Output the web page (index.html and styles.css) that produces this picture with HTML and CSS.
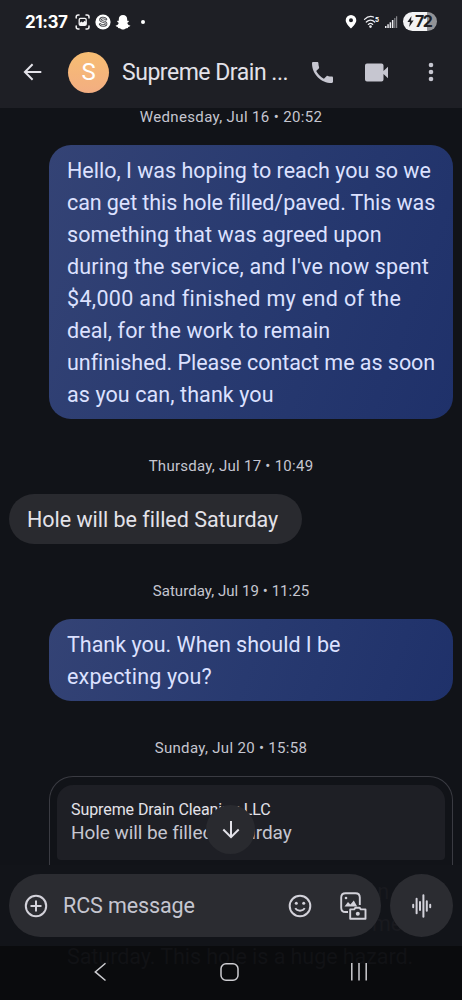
FILE: index.html
```html
<!DOCTYPE html>
<html lang="en">
<head>
<meta charset="utf-8">
<title>Messages</title>
<link rel="stylesheet" href="styles.css">
</head>
<body>
<div class="phone">
  <header class="header">
    <div class="status">
      <span class="clock">21:37</span>
      <svg class="status-left" width="74" height="18" viewBox="0 0 74 18">
        <g fill="none" stroke="#f4f4f6" stroke-width="1.5" stroke-linecap="round">
          <path d="M1.200 5V4Q1.200 2 3.200 2H4M11 2h1q2 0 2 2v1M14 13v1q0 2-2 2h-1M4 16H3.200q-2 0-2-2v-1"/>
        </g>
        <rect x="4.200" y="5.400" width="7" height="7" rx="1.300" fill="none" stroke="#f4f4f6" stroke-width="1.300"/>
        <path d="M4.500 12v-2l2-1.600 1.400 1 1.800-1.600 1.500 1.300V12z" fill="#f4f4f6"/>
        <circle cx="28" cy="9" r="7.600" fill="#fff"/>
        <path d="M31 6.300c-1.500-1.900-5.600-1.500-5.600.5 0 2.300 5.700 1.300 5.700 3.900 0 2.300-4.300 2.600-6 .5" fill="none" stroke="#44454a" stroke-width="2.500" stroke-linecap="round"/>
        <path d="M31 6.300c-1.500-1.900-5.600-1.500-5.600.5 0 2.300 5.700 1.300 5.700 3.900 0 2.300-4.300 2.600-6 .5" fill="none" stroke="#e7e7e8" stroke-width="1" stroke-linecap="round"/>
        <path d="M48 2c2.700 0 4.200 1.800 4.200 4.200v1.600c.5.200 1.300-.2 1.600.4.300.7-1 1-1.400 1.500-.3 1 1.100 2.400 2.900 2.900.3 1-1.400 1.200-2.100 1.500l-.3 1c-.7.200-1.400-.1-2.200.3-.9.500-1.500 1.200-2.700 1.200s-1.800-.7-2.700-1.200c-.8-.4-1.500-.1-2.200-.3l-.3-1c-.7-.3-2.400-.5-2.100-1.500 1.800-.5 3.200-1.900 2.900-2.900-.4-.5-1.700-.8-1.400-1.500.3-.6 1.100-.2 1.600-.4V6.200C43.800 3.800 45.300 2 48 2z" fill="#fff"/>
        <circle cx="68" cy="9" r="2" fill="#fff"/>
      </svg>
      <span class="spacer"></span>
      <svg class="status-right" width="54" height="18" viewBox="0 0 54 18">
        <path fill-rule="evenodd" d="M6 2a5.300 5.300 0 0 1 5.300 5.300C11.300 11 6 15.500 6 15.500S.7 11 .7 7.300A5.300 5.300 0 0 1 6 2zm0 3.200a2 2 0 1 0 0 4 2 2 0 0 0 0-4z" fill="#fff"/>
        <g fill="none" stroke="#ececf0" stroke-width="1.300" stroke-linecap="round"><path d="M19.500 6.400C22.500 3.400 26 3 28.500 4M21.300 9c2.600-2.400 6-2.400 8.400 0M23.300 11.400c1.400-1.200 3.100-1.200 4.400 0"/></g>
        <circle cx="25.500" cy="13.600" r="1.300" fill="#ececf0"/>
        <text x="30" y="8.500" class="wifi-gen">5</text>
        <path d="M40 13h1.500v2H40zM42.300 11.300h1.500V15h-1.500zM44.600 9.300h1.500V15h-1.500zM46.900 7h1.500v8h-1.500z" fill="#ececf0"/>
        <path d="M49.200 5h1.200v10h-1.200zM51 3.300h1.200V15H51z" fill="#85868b"/>
      </svg>
      <div class="battery">
        <svg width="7" height="11" viewBox="0 0 7 11"><path d="M4.500 0 .4 6h2.500L2.200 11l4.400-6.400H4z" fill="#1e1f24"/></svg>
        <span>72</span>
      </div>
    </div>
    <div class="appbar">
      <svg class="back" width="20" height="18" viewBox="0 0 20 18"><path d="M18.300 9H2M9.600 1.300 1.900 9l7.700 7.700" fill="none" stroke="#e3e2e9" stroke-width="2"/></svg>
      <div class="avatar">S</div>
      <h1 class="title">Supreme Drain ...</h1>
      <svg class="call" width="21" height="21" viewBox="3 3 18 18"><path fill="#c6c6d0" d="M20 15.500c-1.250 0-2.450-.2-3.570-.57-.35-.11-.74-.03-1.020.24l-2.200 2.200a15.050 15.050 0 0 1-6.590-6.580l2.200-2.210c.28-.27.36-.66.250-1.010A11.360 11.360 0 0 1 8.500 4c0-.55-.45-1-1-1H4c-.55 0-1 .45-1 1 0 9.390 7.610 17 17 17 .55 0 1-.45 1-1v-3.500c0-.55-.45-1-1-1z"/></svg>
      <svg class="video" width="23" height="19" viewBox="0 0 23 19"><path fill="#c6c6d0" d="M2 .5h14.500q2 0 2 2V8L23 3.700v11.600L18.500 11v5.500q0 2-2 2H2q-2 0-2-2v-14q0-2 2-2z"/></svg>
      <svg class="more" width="6" height="20" viewBox="0 0 6 20"><g fill="#c6c6d0"><circle cx="3" cy="3" r="2.300"/><circle cx="3" cy="10" r="2.300"/><circle cx="3" cy="17" r="2.300"/></g></svg>
    </div>
  </header>

  <main class="thread">
    <time class="stamp first"><span class="d1">Wednesday, Jul 16 • 20:52</span></time>
    <div class="bubble sent">
      <span class="l1">Hello, I was hoping to reach you so we</span><br>
      <span class="l2">can get this hole filled/paved. This was</span><br>
      <span class="l3">something that was agreed upon</span><br>
      <span class="l4">during the service, and I've now spent</span><br>
      <span class="l5">$4,000 and finished my end of the</span><br>
      <span class="l6">deal, for the work to remain</span><br>
      <span class="l7">unfinished. Please contact me as soon</span><br>
      <span class="l8">as you can, thank you</span>
    </div>
    <time class="stamp"><span class="d2">Thursday, Jul 17 • 10:49</span></time>
    <div class="bubble received"><span class="l9">Hole will be filled Saturday</span></div>
    <time class="stamp"><span class="d3">Saturday, Jul 19 • 11:25</span></time>
    <div class="bubble sent">
      <span class="l10">Thank you. When should I be</span><br>
      <span class="l11">expecting you?</span>
    </div>
    <time class="stamp"><span class="d4">Sunday, Jul 20 • 15:58</span></time>
    <div class="reply">
      <div class="quote">
        <div class="quote-name">Supreme Drain Cleaning LLC</div>
        <div class="quote-text">Hole will be filled Saturday</div>
      </div>
    </div>
  </main>

  <button class="jump" aria-label="Scroll down"><svg width="18" height="19" viewBox="0 0 18 19"><path d="M9 1v16M1.300 9.500 9 17.200l7.700-7.700" fill="none" stroke="#e3e2e9" stroke-width="2"/></svg></button>

  <footer class="footer">
    <div class="composer">
      <div class="behind"><span>&nbsp;n</span><span>me</span></div>
      <div class="field">
        <svg width="24" height="24" viewBox="0 0 24 24"><g fill="none" stroke="#d3d2da" stroke-width="2"><circle cx="12" cy="12" r="10.200"/><path d="M12 6.500v11M6.500 12h11"/></g></svg>
        <span class="placeholder">RCS message</span>
        <svg class="smile" width="24" height="24" viewBox="0 0 24 24"><circle cx="12" cy="12" r="10.300" fill="none" stroke="#d3d2da" stroke-width="2"/><circle cx="8.300" cy="9.300" r="1.500" fill="#d3d2da"/><circle cx="15.700" cy="9.300" r="1.500" fill="#d3d2da"/><path d="M7.300 14.200c1.800 3.400 7.600 3.400 9.400 0" fill="none" stroke="#d3d2da" stroke-width="1.800"/></svg>
        <svg class="gallery" width="27" height="28" viewBox="0 0 27 28"><path d="M8 20H5.500Q1.200 20 1.200 15.700V5.500Q1.200 1.200 5.500 1.200h10Q19.800 1.200 19.800 5.500V13" fill="none" stroke="#d3d2da" stroke-width="1.900"/><path d="M4.500 14.500 8 10l2.400 2.500 3.400-4 3.400 6z" fill="#d3d2da"/><circle cx="6" cy="6" r="1.300" fill="#d3d2da"/><path d="M10.200 17.400h4l1.300-1.700h4l1.300 1.700h4.700v9.300H10.200z" fill="#2b2c31" stroke="#d3d2da" stroke-width="1.900" stroke-linejoin="round"/><circle cx="17.800" cy="21.800" r="2" fill="#d3d2da"/></svg>
      </div>
      <div class="voice"><svg width="20" height="24" viewBox="0 0 20 24"><path d="M1.200 10.800v2.400M4.600 4.800v14.400M8 8v8M11.400 1.300v21.400M14.800 7.200v9.600M18.200 10.800v2.400" fill="none" stroke="#d3d2da" stroke-width="2" stroke-linecap="round"/></svg></div>
    </div>
    <div class="nav">
      <div class="nav-ghost"><span>Saturday. This hole is a huge hazard.</span></div>
      <svg class="nav-icons" width="462" height="54" viewBox="0 0 462 54"><g fill="none" stroke="#cdcdd1" stroke-width="1.500"><path d="m105.500 17.300-10.200 8.600 10.200 8.600"/><rect x="221" y="17.700" width="17" height="16.500" rx="5"/><path d="M351.800 17v17.500M359 17v17.500M366.200 17v17.500"/></g></svg>
    </div>
  </footer>
</div>
</body>
</html>
```
FILE: styles.css
```css
* { box-sizing: border-box; }
body { margin: 0; background: #111318; font-family: Roboto, "Liberation Sans", sans-serif; }
svg { display: block; flex: none; }
.phone { position: relative; display: flex; flex-direction: column; width: 462px; height: 1000px; overflow: hidden; background: #111318; }

.header { flex: none; height: 108px; background: #1e1f25; }
.status { display: flex; align-items: center; height: 43px; padding: 0 25px; }
.clock { width: 50px; font: 700 17px/20px Inter, sans-serif; letter-spacing: -0.4px; color: #fff; }
.spacer { flex: 1; }
.wifi-gen { font: 700 7px Roboto, sans-serif; fill: #fff; }
.battery { display: flex; align-items: center; gap: 1px; width: 34px; height: 19px; margin-left: 4px; padding-left: 4px; border-radius: 10px; background: linear-gradient(90deg, #f2f2f4 70%, #929397 70%); font: 700 16px/19px Inter, sans-serif; letter-spacing: -1.5px; color: #1e1f24; }
.appbar { display: flex; align-items: center; height: 58px; padding-left: 23px; }
.avatar { width: 41px; height: 41px; margin-left: 25px; border-radius: 50%; background: linear-gradient(#f7bd72, #f3ae82); color: #fff; font-size: 24px; line-height: 41px; text-align: center; }
.title { width: 190px; margin: 0 0 0 13px; padding-top: 1px; font-size: 23px; line-height: 30px; font-weight: 400; letter-spacing: -0.48px; white-space: nowrap; color: #e3e2e9; }
.video { margin-left: 32px; }
.more { margin-left: 40px; }

.thread { flex: 1; min-height: 0; display: flex; flex-direction: column; padding: 0 9px; overflow: hidden; }
.stamp { flex: none; height: 75px; padding-top: 38px; font-size: 15px; line-height: 18px; text-align: center; color: #c5c6d0; white-space: nowrap; }
.stamp.first { height: 37px; padding-top: 0; }
.bubble { flex: none; padding: 10px 0 8px 18px; font-size: 21.500px; line-height: 32px; white-space: nowrap; border-radius: 24px; }
.sent { width: 404px; align-self: flex-end; border-radius: 22px; background: linear-gradient(110deg, #344375, #283a70 50%, #1f316a); color: #dce1ff; }
.received { width: 293px; border-radius: 25px; background: #292a2f; color: #e3e2e9; }
.l2 { letter-spacing: -0.08px; }
.l3 { letter-spacing: 0.04px; }
.l4 { letter-spacing: 0.16px; }
.l5 { letter-spacing: 0.34px; }
.l6 { letter-spacing: 0.1px; }
.l7 { letter-spacing: -0.04px; }
.l8 { letter-spacing: 0.09px; }
.l9 { letter-spacing: -0.02px; }
.l11 { letter-spacing: 0.16px; }
.d1 { letter-spacing: 0.36px; }
.d2 { letter-spacing: 0.26px; }
.d3 { letter-spacing: 0.05px; }
.d4 { letter-spacing: 0.32px; }
.reply { flex: none; width: 404px; height: 89px; align-self: flex-end; padding: 8px 7px 0; border: 1px solid #3a3b42; border-bottom: 0; border-radius: 24px 24px 0 0; }
.quote { height: 75px; padding: 14px; border-radius: 16px 16px 4px 4px; background: #1e1f25; white-space: nowrap; }
.quote-name { font-size: 16px; line-height: 21px; letter-spacing: -0.08px; color: #e3e2e9; }
.quote-text { font-size: 19px; line-height: 26px; letter-spacing: -0.07px; color: #c5c6d0; }
.jump { position: absolute; left: 206px; top: 805px; width: 49px; height: 49px; padding: 0; border: 0; border-radius: 50%; background: #292a2f; display: grid; place-items: center; }

.footer { flex: none; height: 135px; }
.composer { position: relative; display: flex; gap: 9px; height: 81px; padding: 9px; background: #121419; }
.behind { position: absolute; left: 372px; top: 11px; display: grid; font-size: 21.500px; line-height: 32px; color: #191a1f; }
.field { position: relative; display: flex; align-items: center; width: 372px; height: 63px; padding-left: 15px; border-radius: 32px; background: #2b2c31; }
.placeholder { width: 240px; padding-left: 15px; font-size: 21.500px; line-height: 30px; letter-spacing: -0.1px; color: #c5c6d0; }
.gallery { margin-left: 28px; }
.voice { position: relative; display: grid; place-items: center; width: 63px; height: 63px; border-radius: 50%; background: #2b2c31; }
.nav { position: relative; height: 54px; background: #0a0b0d; }
.nav-ghost { position: absolute; left: 67px; top: -5px; font-size: 21.500px; line-height: 32px; letter-spacing: -0.05px; white-space: nowrap; color: #111215; }
.nav-icons { position: relative; }
```
